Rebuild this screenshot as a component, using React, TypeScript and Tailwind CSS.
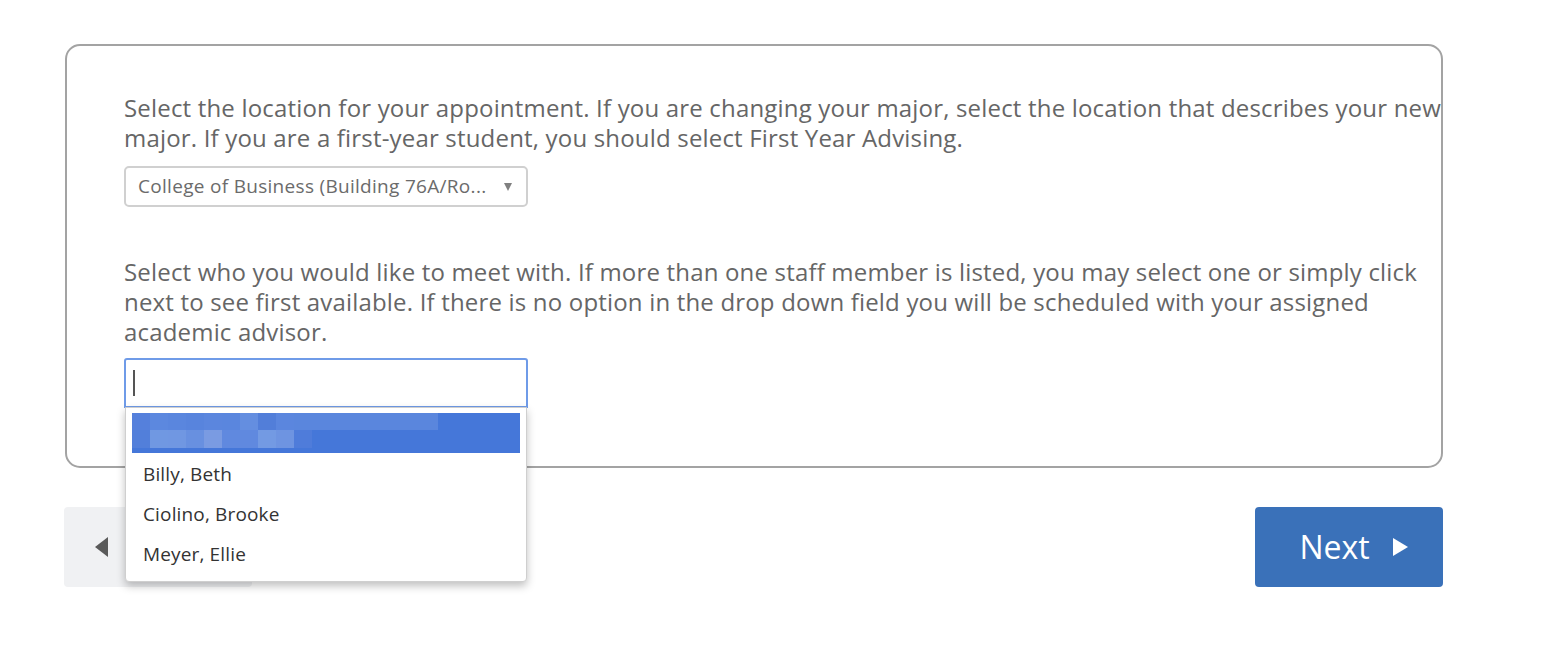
const mosaicTop = ['#5580dc', '#5c88df', '#5a86de', '#5884dd', '#5b86de', '#5a86de', '#648ee0', '#527ed9', '#5b86de', '#5a86dd', '#5a86dd', '#5a86dd', '#5a86dd', '#5a86dd', '#5a86dd', '#5a86dd', '#5a86dd']
const mosaicBottom = ['#527fda', '#7098e2', '#7097e2', '#6890e0', '#7a9be2', '#6089df', '#6089df', '#739ae3', '#6e94e1', '#4f7cda']

function Mosaic() {
  return (
    <div className="absolute left-0 top-[-1px] flex flex-col">
      <div className="flex">
        {mosaicTop.map((c, i) => (
          <div key={i} className="w-[18px] h-[18px]" style={{ backgroundColor: c }} />
        ))}
      </div>
      <div className="flex">
        {mosaicBottom.map((c, i) => (
          <div key={i} className="w-[18px] h-[18px]" style={{ backgroundColor: c }} />
        ))}
      </div>
    </div>
  )
}

export default function App() {
  const staff = ['Billy, Beth', 'Ciolino, Brooke', 'Meyer, Ellie']

  return (
    <div className="min-h-screen bg-white pt-[44px] pl-[64px] w-[1548px]" style={{ fontFamily: '"Open Sans", sans-serif' }}>
      {/* CARD */}
      <div className="ml-px w-[1378px] border-2 border-[#a3a3a3] rounded-[15px] pt-[47px] pb-[58px] pl-[57px] text-[#666666]">
        <p className="text-[24px] leading-[30px] tracking-[0.18px] whitespace-nowrap">
          Select the location for your appointment. If you are changing your major, select the location that describes your new
          <br />
          major. If you are a first-year student, you should select First Year Advising.
        </p>
        <div className="mt-[13px] w-[404px] h-[41px] border-2 border-[#d0d0d0] rounded-[5px] flex items-center justify-between pl-[12px] pr-[14px]">
          <span className="text-[19px] tracking-[0.3px] text-[#6b6b6b]">College of Business (Building 76A/Ro...</span>
          <span className="w-0 h-0 border-l-[4.5px] border-r-[4.5px] border-t-[8px] border-l-transparent border-r-transparent border-t-[#808080]" />
        </div>

        <p className="mt-[50px] text-[24px] leading-[30px] tracking-[0.18px] whitespace-nowrap">
          Select who you would like to meet with. If more than one staff member is listed, you may select one or simply click
          <br />
          next to see first available. If there is no option in the drop down field you will be scheduled with your assigned
          <br />
          academic advisor.
        </p>

        <div className="relative mt-[11px] w-[404px]">
          <div className="h-[50px] border-2 border-[#6f9be8] rounded-t-[3px] bg-white flex items-center pl-[7px]">
            <span className="w-[2px] h-[26px] bg-[#555]" />
          </div>
          {/* DROPDOWN */}
          <div className="absolute left-px top-[49px] w-[402px] z-10 bg-white border border-[#cfcfcf] rounded-b-[4px] shadow-[0_4px_8px_rgba(0,0,0,0.25)] px-[6px] pt-[5px] pb-[8px]">
            <div className="relative h-[40px] bg-[#4577d9] overflow-hidden">
              <Mosaic />
            </div>
            {staff.map((name) => (
              <div key={name} className="h-[40px] flex items-center pt-[2px] pl-[11px] text-[19px] tracking-[0.15px] text-[#333333]">
                {name}
              </div>
            ))}
          </div>
        </div>
      </div>

      {/* BUTTONS */}
      <div className="mt-[39px] w-[1379px] flex justify-between">
        <button className="w-[188px] h-[80px] bg-[#f0f1f3] rounded-[4px] flex items-center pl-[31px]">
          <span className="w-0 h-0 border-t-[10px] border-b-[10px] border-r-[13px] border-t-transparent border-b-transparent border-r-[#5a5a5a]" />
        </button>
        <button className="w-[188px] h-[80px] bg-[#3a71b9] rounded-[4px] flex items-center justify-center gap-[23px] pl-[9px] text-white text-[32px]">
          <span>Next</span>
          <span className="w-0 h-0 border-t-[9.5px] border-b-[9.5px] border-l-[15px] border-t-transparent border-b-transparent border-l-white" />
        </button>
      </div>
    </div>
  )
}
